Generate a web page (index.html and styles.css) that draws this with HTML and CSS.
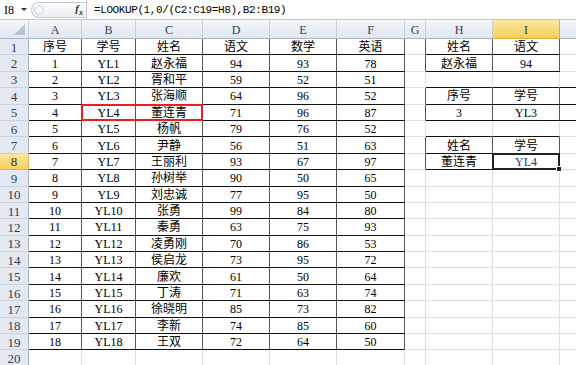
FILE: index.html
```html
<!DOCTYPE html>
<html lang="zh-CN">
<head>
  <meta charset="UTF-8">
  <meta name="viewport" content="width=device-width, initial-scale=1.0">
  <title>LOOKUP 查找</title>
  <link rel="stylesheet" href="styles.css">
</head>
<body>
  <div class="formula-bar">
    <div class="name-box">
      <span class="cell-ref">I8</span>
      <span class="drop"></span>
    </div>
    <div class="fx-pill">
      <span class="knob"></span>
      <span class="fx">f<sub>x</sub></span>
    </div>
    <div class="formula">=LOOKUP(1,0/(C2:C19=H8),B2:B19)</div>
  </div>

  <div class="sheet" id="sheet">
    <!-- overlays: drawn rectangle and active cell -->
    <div class="mark"></div>
    <div class="selection"></div>
  </div>

  <script>
    const COLS = ['A', 'B', 'C', 'D', 'E', 'F', 'G', 'H', 'I', 'J'];
    const ROW_COUNT = 20;

    const table = [
      ['序号', '学号', '姓名', '语文', '数学', '英语'],
      ['1', 'YL1', '赵永福', '94', '93', '78'],
      ['2', 'YL2', '胥和平', '59', '52', '51'],
      ['3', 'YL3', '张海顺', '64', '96', '52'],
      ['4', 'YL4', '董连青', '71', '96', '87'],
      ['5', 'YL5', '杨帆', '79', '76', '52'],
      ['6', 'YL6', '尹静', '56', '51', '63'],
      ['7', 'YL7', '王丽利', '93', '67', '97'],
      ['8', 'YL8', '孙树举', '90', '50', '65'],
      ['9', 'YL9', '刘忠诚', '77', '95', '50'],
      ['10', 'YL10', '张勇', '99', '84', '80'],
      ['11', 'YL11', '秦勇', '63', '75', '93'],
      ['12', 'YL12', '凌勇刚', '70', '86', '53'],
      ['13', 'YL13', '侯启龙', '73', '95', '72'],
      ['14', 'YL14', '廉欢', '61', '50', '64'],
      ['15', 'YL15', '丁涛', '71', '63', '74'],
      ['16', 'YL16', '徐晓明', '85', '73', '82'],
      ['17', 'YL17', '李新', '74', '85', '60'],
      ['18', 'YL18', '王双', '72', '64', '50']
    ];

    const values = {};
    table.forEach((row, r) => {
      row.forEach((v, c) => { values[COLS[c] + (r + 1)] = v; });
    });
    Object.assign(values, {
      H1: '姓名', I1: '语文', H2: '赵永福', I2: '94',
      H4: '序号', I4: '学号', H5: '3', I5: 'YL3',
      H7: '姓名', I7: '学号', H8: '董连青', I8: 'YL4'
    });

    // ranges with thin borders (column index 0 = A)
    const boxes = [
      { c1: 0, r1: 1, c2: 5, r2: 19 },
      { c1: 7, r1: 1, c2: 8, r2: 2 },
      { c1: 7, r1: 4, c2: 9, r2: 5 },
      { c1: 7, r1: 7, c2: 8, r2: 8 }
    ];

    const active = { col: 8, row: 8 };

    function edges(c, r) {
      let right = false;
      let bottom = false;
      boxes.forEach(b => {
        if (r >= b.r1 && r <= b.r2 && c >= b.c1 - 1 && c <= b.c2) right = true;
        if (c >= b.c1 && c <= b.c2 && r >= b.r1 - 1 && r <= b.r2) bottom = true;
      });
      return { right, bottom };
    }

    function addCell(sheet, cls, text, row, col) {
      const el = document.createElement('div');
      el.className = cls;
      el.textContent = text;
      el.style.gridRow = row;
      el.style.gridColumn = col;
      sheet.appendChild(el);
      return el;
    }

    function renderSheet() {
      const sheet = document.getElementById('sheet');

      addCell(sheet, 'corner', '', 1, 1);
      COLS.forEach((name, c) => {
        const cls = 'col-head' + (c === active.col ? ' selected' : '');
        // last column is only partly in view, its letter sits off screen
        const label = c === COLS.length - 1 ? '' : name;
        addCell(sheet, cls, label, 1, c + 2);
      });

      for (let r = 1; r <= ROW_COUNT; r++) {
        const cls = 'row-head' + (r === active.row ? ' selected' : '');
        addCell(sheet, cls, r, r + 1, 1);

        COLS.forEach((name, c) => {
          const e = edges(c, r);
          let cls = 'cell';
          if (e.right) cls += ' edge-r';
          if (e.bottom) cls += ' edge-b';
          if (c === active.col && r === active.row) cls += ' current';
          addCell(sheet, cls, values[name + r] || '', r + 1, c + 2);
        });
      }
    }

    renderSheet();
  </script>
</body>
</html>
```

FILE: styles.css
```css
body {
  margin: 0;
  width: 576px;
  height: 365px;
  overflow: hidden;
  background-color: #fff;
  font-family: "Liberation Serif", "Noto Sans CJK SC", serif;
  font-size: 12px;
  color: #000;
}

/* formula bar */
.formula-bar {
  display: flex;
  height: 19px;
  border-bottom: 1px solid #c3cbd6;
  background-color: #fff;
}

.name-box {
  width: 31px;
  display: flex;
  align-items: center;
  padding-left: 4px;
  box-sizing: border-box;
}

.cell-ref {
  font-size: 12px;
  line-height: 1;
}

.drop {
  width: 0;
  height: 0;
  margin-left: 7px;
  border-left: 3px solid transparent;
  border-right: 3px solid transparent;
  border-top: 3px solid #333;
}

.fx-pill {
  width: 55px;
  margin: 2px 0 1px 0;
  padding: 0 3px 0 2px;
  box-sizing: border-box;
  display: flex;
  align-items: center;
  justify-content: space-between;
  border: 1px solid #c4cad2;
  border-right: none;
  border-radius: 8px 0 0 8px;
  background: linear-gradient(#fdfdfe, #eceef1);
}

.knob {
  width: 8px;
  height: 8px;
  border-radius: 50%;
  border: 1px solid #cdd2d9;
  background-color: #f5f6f8;
}

.fx {
  font-style: italic;
  font-weight: bold;
  font-size: 11px;
  color: #333;
  line-height: 1;
}

.fx sub {
  font-size: 8px;
}

.formula {
  flex: 1;
  display: flex;
  align-items: center;
  padding-left: 7px;
  border-left: 1px solid #c4cad2;
  font-family: "Liberation Mono", monospace;
  font-size: 11px;
  letter-spacing: -0.4px;
  white-space: nowrap;
}

/* sheet grid */
.sheet {
  display: grid;
  grid-template-columns: 29px 53px 54px 67px 67px 67px 68px 21px 67px 67px 64px;
  grid-template-rows: 19px repeat(20, 16.4px);
  overflow: hidden;
}

.cell,
.col-head,
.row-head,
.corner {
  box-sizing: border-box;
  display: flex;
  align-items: center;
  justify-content: center;
  white-space: nowrap;
  overflow: hidden;
  line-height: 1;
  padding-top: 1px;
}

.cell {
  border-right: 1px solid #dde1e7;
  border-bottom: 1px solid #dde1e7;
}

.cell.edge-r {
  border-right-color: #555;
}

.cell.edge-b {
  border-bottom-color: #111;
}

.cell.current {
  color: #233b75;
}

.corner {
  position: relative;
  background: linear-gradient(#f3f6fa, #e1e7ef);
  border-right: 1px solid #c5cfdb;
  border-bottom: 1px solid #a9b8c9;
}

.corner::after {
  content: '';
  position: absolute;
  right: 3px;
  bottom: 3px;
  width: 0;
  height: 0;
  border-left: 11px solid transparent;
  border-bottom: 11px solid #b9c2cd;
}

.col-head {
  background: linear-gradient(#f3f6fa, #e1e7ef);
  border-right: 1px solid #c5cfdb;
  border-bottom: 1px solid #a9b8c9;
  color: #2f3f55;
}

.row-head {
  background-color: #e4e9f1;
  border-right: 1px solid #a9b8c9;
  border-bottom: 1px solid #c8d1dc;
  color: #2f3f55;
  font-size: 13px;
}

.col-head.selected,
.row-head.selected {
  background: linear-gradient(#fbe7a1, #f6cf5d);
  border-right-color: #e2b04a;
  border-bottom-color: #e2a93a;
  color: #3b3320;
}

/* overlays */
.mark {
  grid-column: 3 / 5;
  grid-row: 6;
  z-index: 2;
  margin: -1px 0 0 -1px;
  border: 2px solid #f01c1c;
}

.selection {
  grid-column: 10;
  grid-row: 9;
  z-index: 2;
  position: relative;
  margin: -1px 0 0 -1px;
  border: 2px solid #222;
}

.selection::after {
  content: '';
  position: absolute;
  right: -4px;
  bottom: -4px;
  width: 4px;
  height: 4px;
  background-color: #222;
  border: 1px solid #fff;
}
```
